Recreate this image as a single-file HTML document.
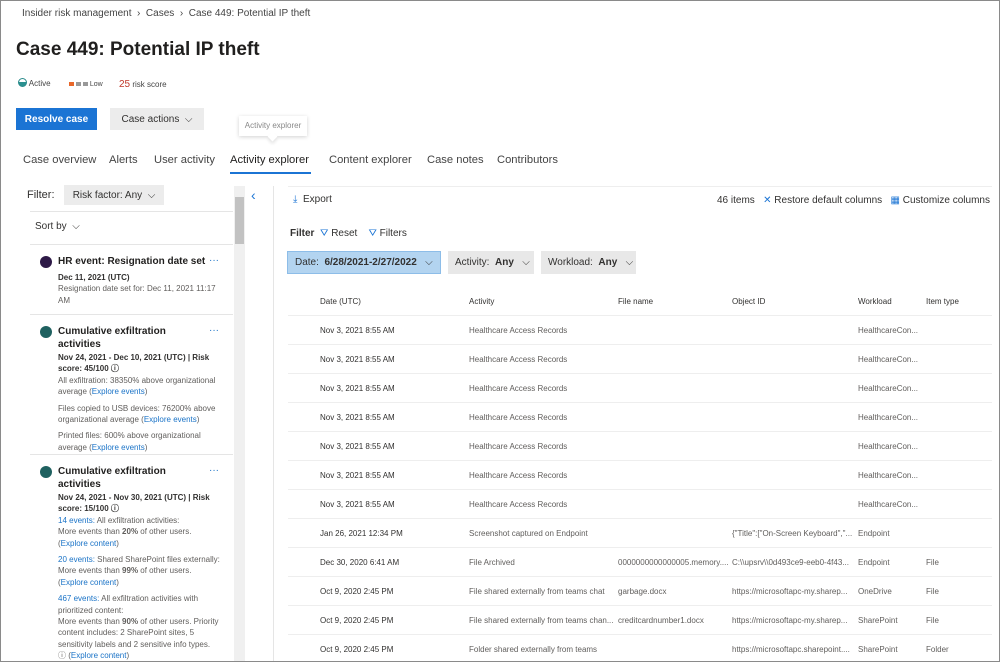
<!DOCTYPE html>
<html><head><meta charset="utf-8"><style>
*{margin:0;padding:0;box-sizing:border-box}
body{width:1000px;height:662px;overflow:hidden;background:#fff;font-family:"Liberation Sans",sans-serif;color:#323130;position:relative}
.frame{position:absolute;inset:0;border:1px solid #8a8a8a;pointer-events:none;z-index:10}
.a{position:absolute;white-space:nowrap}
.bc{top:8px;left:22px;font-size:10px;color:#444}
h1{position:absolute;left:16px;top:39px;font-size:19px;font-weight:bold;color:#201f1e}
.btn{position:absolute;font-size:10px;display:flex;align-items:center;justify-content:center}
.tab{top:154px;font-size:11.2px;color:#444}
.lk{color:#1a73c7}
.card{position:absolute;left:30px;width:203px;border-top:1px solid #e5e5e5;font-size:8px;line-height:11.4px;color:#605e5c;overflow:hidden}
.card .in{padding:10px 0 0 28px;width:190px}
.card b.t{display:block;font-size:10px;color:#201f1e;line-height:13px;width:150px;margin-bottom:1px}
.dot{position:absolute;left:10px;width:12px;height:12px;border-radius:50%}
.dots{position:absolute;right:14px;color:#1a73c7;font-size:10px}
.card .h{font-weight:bold;color:#323130}
.mt{margin-top:5px}
.row{position:absolute;left:288px;width:704px;height:29px;border-bottom:1px solid #eee;font-size:8px;color:#605e5c}
.row span{position:absolute;top:10px;white-space:nowrap}
.c1{left:32px;color:#323130}.c2{left:181px}.c3{left:330px}.c4{left:444px}.c5{left:570px}.c6{left:638px}
.chip{position:absolute;top:251px;height:23px;font-size:10px;display:flex;align-items:center;padding-left:7px;background:#e8e8e8}
</style></head><body>
<div class="frame"></div>
<div class="a bc">Insider risk management &nbsp;›&nbsp; Cases &nbsp;›&nbsp; Case 449: Potential IP theft</div>
<h1>Case 449: Potential IP theft</h1>
<div class="a" style="top:78px;left:18px;font-size:8px;color:#444"><span style="display:inline-block;width:9px;height:9px;border-radius:50%;border:1px solid #2a8b8b;background:linear-gradient(#fff 45%,#2a9090 45%);vertical-align:-1px"></span> Active</div>
<div class="a" style="top:81px;left:69px;font-size:7px;color:#444"><span style="display:inline-block;width:5px;height:4px;background:#e8672a"></span> <span style="display:inline-block;width:5px;height:4px;background:#999"></span> <span style="display:inline-block;width:5px;height:4px;background:#999"></span> Low</div>
<div class="a" style="top:79px;left:119px;font-size:8px;color:#444"><span style="color:#c0392b;font-size:10px">25</span> risk score</div>
<div class="btn" style="left:16px;top:108px;width:81px;height:22px;background:#1b74d4;color:#fff;font-weight:bold">Resolve case</div>
<div class="btn" style="left:110px;top:108px;width:94px;height:22px;background:#ececec;color:#323130">Case actions &nbsp;⌵</div>
<div class="a" style="left:239px;top:116px;width:68px;height:20px;background:#fff;box-shadow:0 1px 4px rgba(0,0,0,.18);font-size:8px;color:#888;text-align:center;line-height:20px">Activity explorer</div>
<div class="a" style="left:269px;top:133px;width:7px;height:7px;background:#fff;transform:rotate(45deg);box-shadow:2px 2px 3px rgba(0,0,0,.1)"></div>
<div class="a tab" style="left:23px">Case overview</div>
<div class="a tab" style="left:109px">Alerts</div>
<div class="a tab" style="left:154px">User activity</div>
<div class="a tab" style="left:230px;color:#201f1e">Activity explorer</div>
<div class="a" style="left:230px;top:172px;width:81px;height:2px;background:#1b74d4"></div>
<div class="a tab" style="left:329px">Content explorer</div>
<div class="a tab" style="left:427px">Case notes</div>
<div class="a tab" style="left:497px">Contributors</div>

<div class="a" style="left:27px;top:189px;font-size:11px">Filter:</div>
<div class="btn" style="left:64px;top:185px;width:100px;height:20px;background:#ececec">Risk factor: Any &nbsp;⌵</div>
<div class="a" style="left:30px;top:211px;width:203px;height:1px;background:#e5e5e5"></div>
<div class="a" style="left:35px;top:221px;font-size:10px">Sort by &nbsp;⌵</div>
<div class="a" style="left:234px;top:186px;width:11px;height:476px;background:#f0f0f0"></div>
<div class="a" style="left:235px;top:197px;width:9px;height:47px;background:#c2c2c2"></div>
<div class="a" style="left:251px;top:187px;font-size:14px;color:#1b74d4">‹</div>
<div class="a" style="left:273px;top:186px;width:1px;height:476px;background:#e5e5e5"></div>
<div class="a" style="left:288px;top:186px;width:704px;height:1px;background:#eee"></div>

<div class="card" style="top:244px;height:70px"><div class="dot" style="top:11px;background:#2e1a47"></div><span class="dots" style="top:10px">···</span>
<div class="in"><b class="t" style="width:170px">HR event: Resignation date set</b><div style="margin-top:4px;width:165px;white-space:normal"><span class="h">Dec 11, 2021 (UTC)</span><br>Resignation date set for: Dec 11, 2021 11:17 AM</div></div></div>
<div class="card" style="top:314px;height:140px"><div class="dot" style="top:11px;background:#1f6160"></div><span class="dots" style="top:10px">···</span>
<div class="in"><b class="t">Cumulative exfiltration activities</b><div class="h">Nov 24, 2021 - Dec 10, 2021 (UTC) | Risk score: 45/100 ⓘ</div>All exfiltration: 38350% above organizational average (<span class="lk">Explore events</span>)<div class="mt">Files copied to USB devices: 76200% above organizational average (<span class="lk">Explore events</span>)</div><div class="mt">Printed files: 600% above organizational average (<span class="lk">Explore events</span>)</div></div></div>
<div class="card" style="top:454px;height:208px"><div class="dot" style="top:11px;background:#1f6160"></div><span class="dots" style="top:10px">···</span>
<div class="in"><b class="t">Cumulative exfiltration activities</b><div class="h">Nov 24, 2021 - Nov 30, 2021 (UTC) | Risk score: 15/100 ⓘ</div><span class="lk">14 events:</span> All exfiltration activities:<br>More events than <b>20%</b> of other users.<br>(<span class="lk">Explore content</span>)<div class="mt"><span class="lk">20 events:</span> Shared SharePoint files externally: More events than <b>99%</b> of other users.<br>(<span class="lk">Explore content</span>)</div><div class="mt"><span class="lk">467 events:</span> All exfiltration activities with prioritized content:<br>More events than <b>90%</b> of other users. Priority content includes: 2 SharePoint sites, 5 sensitivity labels and 2 sensitive info types. ⓘ (<span class="lk">Explore content</span>)</div></div></div>

<div class="a" style="left:293px;top:194px;font-size:10px"><span style="color:#1b74d4">⤓</span> &nbsp;Export</div>
<div class="a" style="left:717px;top:195px;font-size:10px">46 items &nbsp;&nbsp;<span style="color:#1b74d4">✕</span> Restore default columns &nbsp;&nbsp;<span style="color:#1b74d4">▦</span> Customize columns</div>
<div class="a" style="left:290px;top:228px;font-size:10px"><b>Filter</b> &nbsp;<span style="color:#1b74d4">⛛</span> Reset &nbsp;&nbsp;&nbsp;<span style="color:#1b74d4">⛛</span> Filters</div>
<div class="chip" style="left:287px;width:154px;background:#b3d4f0;border:1px solid #8dbde8">Date: &nbsp;<b>6/28/2021-2/27/2022</b>&nbsp;&nbsp; ⌵</div>
<div class="chip" style="left:448px;width:86px">Activity: &nbsp;<b>Any</b>&nbsp;&nbsp; ⌵</div>
<div class="chip" style="left:541px;width:95px">Workload: &nbsp;<b>Any</b>&nbsp;&nbsp; ⌵</div>

<div class="row" style="top:287px"><span class="c1">Date (UTC)</span><span class="c2" style="color:#323130">Activity</span><span class="c3" style="color:#323130">File name</span><span class="c4" style="color:#323130">Object ID</span><span class="c5" style="color:#323130">Workload</span><span class="c6" style="color:#323130">Item type</span></div>
<div class="row" style="top:316px"><span class="c1">Nov 3, 2021 8:55 AM</span><span class="c2">Healthcare Access Records</span><span class="c5">HealthcareCon...</span></div>
<div class="row" style="top:345px"><span class="c1">Nov 3, 2021 8:55 AM</span><span class="c2">Healthcare Access Records</span><span class="c5">HealthcareCon...</span></div>
<div class="row" style="top:374px"><span class="c1">Nov 3, 2021 8:55 AM</span><span class="c2">Healthcare Access Records</span><span class="c5">HealthcareCon...</span></div>
<div class="row" style="top:403px"><span class="c1">Nov 3, 2021 8:55 AM</span><span class="c2">Healthcare Access Records</span><span class="c5">HealthcareCon...</span></div>
<div class="row" style="top:432px"><span class="c1">Nov 3, 2021 8:55 AM</span><span class="c2">Healthcare Access Records</span><span class="c5">HealthcareCon...</span></div>
<div class="row" style="top:461px"><span class="c1">Nov 3, 2021 8:55 AM</span><span class="c2">Healthcare Access Records</span><span class="c5">HealthcareCon...</span></div>
<div class="row" style="top:490px"><span class="c1">Nov 3, 2021 8:55 AM</span><span class="c2">Healthcare Access Records</span><span class="c5">HealthcareCon...</span></div>
<div class="row" style="top:519px"><span class="c1">Jan 26, 2021 12:34 PM</span><span class="c2">Screenshot captured on Endpoint</span><span class="c4">{"Title":["On-Screen Keyboard","...</span><span class="c5">Endpoint</span></div>
<div class="row" style="top:548px"><span class="c1">Dec 30, 2020 6:41 AM</span><span class="c2">File Archived</span><span class="c3">0000000000000005.memory....</span><span class="c4">C:\\upsrv\\0d493ce9-eeb0-4f43...</span><span class="c5">Endpoint</span><span class="c6">File</span></div>
<div class="row" style="top:577px"><span class="c1">Oct 9, 2020 2:45 PM</span><span class="c2">File shared externally from teams chat</span><span class="c3">garbage.docx</span><span class="c4">https://microsoftapc-my.sharep...</span><span class="c5">OneDrive</span><span class="c6">File</span></div>
<div class="row" style="top:606px"><span class="c1">Oct 9, 2020 2:45 PM</span><span class="c2">File shared externally from teams chan...</span><span class="c3">creditcardnumber1.docx</span><span class="c4">https://microsoftapc-my.sharep...</span><span class="c5">SharePoint</span><span class="c6">File</span></div>
<div class="row" style="top:635px;border:none"><span class="c1">Oct 9, 2020 2:45 PM</span><span class="c2">Folder shared externally from teams</span><span class="c4">https://microsoftapc.sharepoint....</span><span class="c5">SharePoint</span><span class="c6">Folder</span></div>
</body></html>
